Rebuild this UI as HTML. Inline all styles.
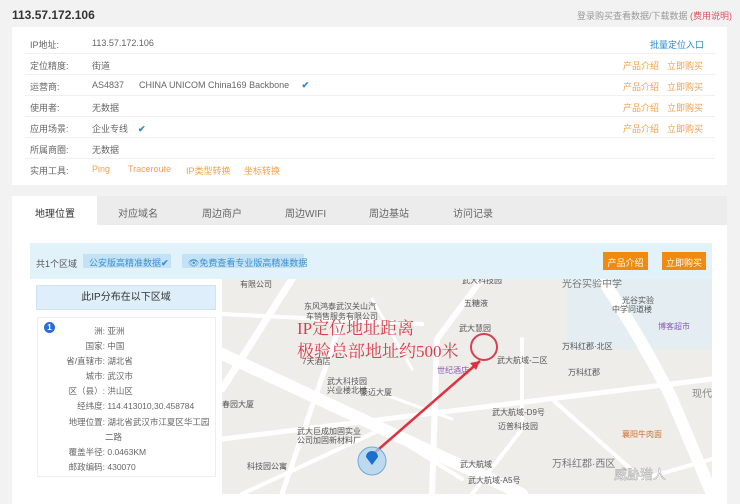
<!DOCTYPE html>
<html><head><meta charset="utf-8"><style>
*{margin:0;padding:0;box-sizing:border-box}
body{width:740px;height:504px;overflow:hidden;background:#f2f2f2;font-family:"Liberation Sans","Noto Sans CJK SC",sans-serif;font-size:9px;color:#666;position:relative}
.a{position:absolute;white-space:nowrap}
.o{color:#f0a050}
.row{position:absolute;left:25px;width:690px;height:21px;border-bottom:1px solid #f0f0f0}
.row span{position:absolute;top:5px}
</style></head><body>
<div class="a" style="left:12px;top:8px;font-size:12px;font-weight:bold;color:#333">113.57.172.106</div>
<div class="a" style="left:577px;top:9px;color:#999">登录购买查看数据/下载数据 <span style="color:#e05060">(费用说明)</span></div>
<div class="a" style="left:12px;top:27px;width:715px;height:158px;background:#fff"></div>

<div class="row" style="top:33px"><span style="left:5px">IP地址:</span><span style="left:67px">113.57.172.106</span><span style="left:625px;color:#2a8ad0">批量定位入口</span></div>
<div class="row" style="top:54px"><span style="left:5px">定位精度:</span><span style="left:67px">街道</span><span class="o" style="left:598px">产品介绍</span><span class="o" style="left:642px">立即购买</span></div>
<div class="row" style="top:75px"><span style="left:5px">运营商:</span><span style="left:67px">AS4837 &nbsp;&nbsp;&nbsp;&nbsp; CHINA UNICOM China169 Backbone &nbsp;&nbsp;&nbsp; <b style="color:#2a8ad0">✔</b></span><span class="o" style="left:598px">产品介绍</span><span class="o" style="left:642px">立即购买</span></div>
<div class="row" style="top:96px"><span style="left:5px">使用者:</span><span style="left:67px">无数据</span><span class="o" style="left:598px">产品介绍</span><span class="o" style="left:642px">立即购买</span></div>
<div class="row" style="top:117px"><span style="left:5px">应用场景:</span><span style="left:67px">企业专线 &nbsp;&nbsp; <b style="color:#2a8ad0">✔</b></span><span class="o" style="left:598px">产品介绍</span><span class="o" style="left:642px">立即购买</span></div>
<div class="row" style="top:138px"><span style="left:5px">所属商圈:</span><span style="left:67px">无数据</span></div>
<div class="row" style="top:159px;border:none"><span style="left:5px">实用工具:</span><span class="o" style="left:67px">Ping</span><span class="o" style="left:103px">Traceroute</span><span class="o" style="left:161px">IP类型转换</span><span class="o" style="left:219px">坐标转换</span></div>

<div class="a" style="left:12px;top:196px;width:715px;height:29px;background:#ececec"></div>
<div class="a" style="left:12px;top:196px;width:85px;height:29px;background:#fff"></div>
<div class="a" style="left:35px;top:205px;font-size:10px;color:#333">地理位置</div>
<div class="a" style="left:118px;top:205px;font-size:10px">对应域名</div>
<div class="a" style="left:202px;top:205px;font-size:10px">周边商户</div>
<div class="a" style="left:285px;top:205px;font-size:10px">周边WIFI</div>
<div class="a" style="left:369px;top:205px;font-size:10px">周边基站</div>
<div class="a" style="left:453px;top:205px;font-size:10px">访问记录</div>
<div class="a" style="left:12px;top:225px;width:715px;height:279px;background:#fff"></div>

<div class="a" style="left:30px;top:243px;width:682px;height:36px;background:#e2f2fb"></div>
<div class="a" style="left:36px;top:257px;color:#555">共1个区域</div>
<div class="a" style="left:83px;top:254px;width:88px;height:14px;background:#c4e2f6;color:#3a90d0;padding:2px 6px">公安版高精准数据<b>✔</b></div>
<div class="a" style="left:182px;top:254px;width:122px;height:14px;background:#c4e2f6;color:#3a90d0;padding:2px 6px">👁免费查看专业版高精准数据</div>
<div class="a" style="left:603px;top:252px;width:45px;height:18px;background:#f08a10;color:#fff;padding:4px 0;text-align:center">产品介绍</div>
<div class="a" style="left:662px;top:252px;width:44px;height:18px;background:#f08a10;color:#fff;padding:4px 0;text-align:center">立即购买</div>

<div class="a" style="left:36px;top:285px;width:180px;height:25px;background:#deeefa;border:1px solid #cfe3f2;color:#333;font-size:10px;text-align:center;line-height:23px">此IP分布在以下区域</div>
<div class="a" style="left:37px;top:317px;width:179px;height:160px;border:1px solid #eee"></div>
<div class="a" style="left:44px;top:322px;width:11px;height:11px;border-radius:50%;background:#2a6fd0;color:#fff;font-size:8px;text-align:center;line-height:11px;font-weight:bold">1</div>
<div class="a" style="left:50px;top:324px;width:165px;line-height:15.1px;font-size:8.5px">
<div style="display:flex"><div style="width:55px;text-align:right">洲:</div><div>&nbsp;亚洲</div></div>
<div style="display:flex"><div style="width:55px;text-align:right">国家:</div><div>&nbsp;中国</div></div>
<div style="display:flex"><div style="width:55px;text-align:right">省/直辖市:</div><div>&nbsp;湖北省</div></div>
<div style="display:flex"><div style="width:55px;text-align:right">城市:</div><div>&nbsp;武汉市</div></div>
<div style="display:flex"><div style="width:55px;text-align:right">区（县）:</div><div>&nbsp;洪山区</div></div>
<div style="display:flex"><div style="width:55px;text-align:right">经纬度:</div><div>&nbsp;114.413010,30.458784</div></div>
<div style="display:flex"><div style="width:55px;text-align:right">地理位置:</div><div style="white-space:normal;width:105px">&nbsp;湖北省武汉市江夏区华工园二路</div></div>
<div style="display:flex"><div style="width:55px;text-align:right">覆盖半径:</div><div>&nbsp;0.0463KM</div></div>
<div style="display:flex"><div style="width:55px;text-align:right">邮政编码:</div><div>&nbsp;430070</div></div>
</div>

<svg class="a" style="left:222px;top:279px" width="490" height="215" viewBox="0 0 490 215">
<rect width="490" height="215" fill="#eeedea"/>
<rect x="345" y="0" width="145" height="70" fill="#e4eef2"/>
<g stroke="#fff" fill="none" stroke-linecap="round">
<path d="M0 75 L300 215" stroke-width="12"/>
<path d="M380 0 Q420 60 450 120 L490 215" stroke-width="12"/>
<path d="M70 0 L0 110" stroke-width="7"/>
<path d="M0 160 L490 100" stroke-width="5"/>
<path d="M260 0 L215 60 L210 215" stroke-width="6"/>
<path d="M120 40 L60 215" stroke-width="5"/>
<path d="M0 35 L200 45" stroke-width="4"/>
<path d="M300 60 L300 150 L250 215" stroke-width="4"/>
<path d="M330 120 L420 200 L490 180" stroke-width="4"/>
<path d="M20 215 L160 150 L240 200" stroke-width="4"/>
<path d="M120 100 L230 140" stroke-width="3"/>
<path d="M150 20 L190 90" stroke-width="3"/>
</g>
<g font-size="8" fill="#555" font-family="Liberation Sans,Noto Sans CJK SC,sans-serif">
<text x="18" y="8">有限公司</text><text x="82" y="30">东风鸿泰武汉关山汽</text><text x="84" y="40">车销售服务有限公司</text>
<text x="80" y="85">7天酒店</text><text x="0" y="128">春园大厦</text><text x="105" y="105">武大科技园</text><text x="105" y="114">兴业楼北楼</text>
<text x="75" y="155">武大巨成加固实业</text><text x="75" y="164">公司加固新材料厂</text><text x="25" y="190">科技园公寓</text>
<text x="138" y="116">豪迈大厦</text><text x="240" y="4">武大科技园</text><text x="242" y="27">五糖液</text><text x="237" y="52">武大慧园</text>
<text x="275" y="84">武大航域-二区</text><text x="215" y="94" fill="#8a5ab0">世纪酒店</text><text x="340" y="70">万科红郡·北区</text><text x="346" y="96">万科红郡</text>
<text x="270" y="136">武大航域-D9号</text><text x="276" y="150">迈普科技园</text><text x="400" y="158" fill="#d07030">襄阳牛肉面</text>
<text x="238" y="188">武大航域</text><text x="246" y="204">武大航域-A5号</text><text x="400" y="24">光谷实验</text><text x="390" y="33">中学问道楼</text>
<text x="436" y="50" fill="#8a5ab0">博客超市</text><text x="340" y="8" font-size="10" fill="#777">光谷实验中学</text>
<text x="470" y="118" font-size="10" fill="#888">现代</text><text x="330" y="188" font-size="10" fill="#777">万科红郡·西区</text>
</g>
<g font-family="Liberation Serif,Noto Serif CJK SC,serif" fill="#d84050" font-size="17">
<text x="75" y="55">IP定位地址距离</text><text x="75" y="78">极验总部地址约500米</text></g>
<circle cx="262" cy="68" r="13" fill="none" stroke="#d84050" stroke-width="2"/>
<path d="M150 176 L258 82" stroke="#e03040" stroke-width="2.5"/>
<path d="M258 82 L248 84 L254 91 Z" fill="#e03040"/>
<circle cx="150" cy="182" r="14" fill="#a8d0f0" fill-opacity=".7" stroke="#6fa8e0"/>
<path d="M150 186 L144 178 A6 6 0 1 1 156 178 Z" fill="#1a70d0"/>
<text x="392" y="200" font-size="13" fill="#fff" stroke="#999" stroke-width=".4" font-family="Noto Sans CJK SC,sans-serif">威胁猎人</text>
</svg>
</body></html>
